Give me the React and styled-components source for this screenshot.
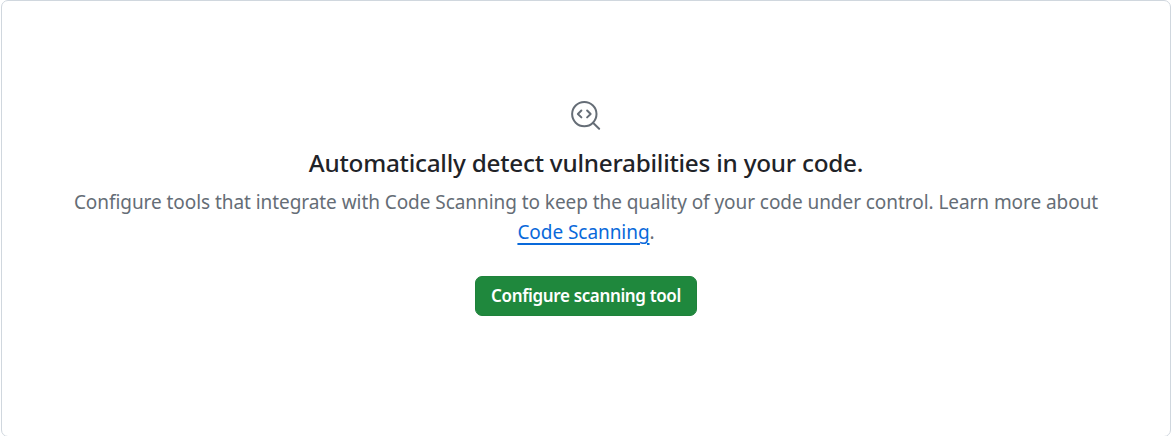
import React from "react";
import styled, { createGlobalStyle } from "styled-components";

const GlobalStyle = createGlobalStyle`
  * { box-sizing: border-box; }
  body { margin: 0; background: #fff; font-family: "Segoe UI", "Noto Sans", "Open Sans", sans-serif; }
`;
const Frame = styled.main`
  height: 436px;
  padding-left: 1px;
  overflow: hidden;
`;
const Blankslate = styled.section`
  display: flex;
  flex-direction: column;
  align-items: center;
  height: 437px;
  padding-top: 99px;
  border: 1px solid #d0d7de;
  border-radius: 7px;
  white-space: nowrap;
`;
const Icon = styled.svg`
  display: block;
  width: 30px;
  height: 30px;
  fill: none;
  stroke: #656d76;
  stroke-width: 1.6;
  stroke-linecap: round;
  stroke-linejoin: round;
`;
const Heading = styled.h2`
  margin: 14px 0 0;
  font-size: 24.3px;
  line-height: 37px;
  font-weight: 500;
  letter-spacing: -0.235px;
  color: #1f2328;
`;
const Description = styled.p`
  margin: 6px 0 0;
  font-size: 19px;
  line-height: 30px;
  letter-spacing: -0.06px;
  text-align: center;
  color: #656d76;
`;
const Line = styled.span`
  display: block;
`;
const Link = styled.a`
  color: #0969da;
  text-decoration: underline;
  text-decoration-thickness: 2px;
  text-underline-offset: 4px;
`;
const Button = styled.button`
  width: 222px;
  height: 40px;
  margin-top: 29px;
  padding: 0 0 2px;
  border: 1px solid #1f823b;
  border-radius: 7px;
  background: #1f883d;
  color: #fff;
  font: 600 17px/25px "Segoe UI", "Noto Sans", sans-serif;
  letter-spacing: -0.36px;
`;

export default function App() {
  return (
    <>
      <GlobalStyle />
      <Frame>
        <Blankslate>
          <Icon viewBox="0 0 24 24" aria-hidden="true">
            <circle cx="10.65" cy="11.25" r="9.75" />
            <path d="m17.8 18.4 4.7 4.6" />
            <path d="M8.3 8.4 5.5 11.15l2.8 2.75M12.9 8.4l2.8 2.75-2.8 2.75" />
          </Icon>
          <Heading>Automatically detect vulnerabilities in your code.</Heading>
          <Description>
            <Line>Configure tools that integrate with Code Scanning to keep the quality of your code under control. Learn more about</Line>
            <Line><Link>Code Scanning</Link>.</Line>
          </Description>
          <Button type="button">Configure scanning tool</Button>
        </Blankslate>
      </Frame>
    </>
  );
}
